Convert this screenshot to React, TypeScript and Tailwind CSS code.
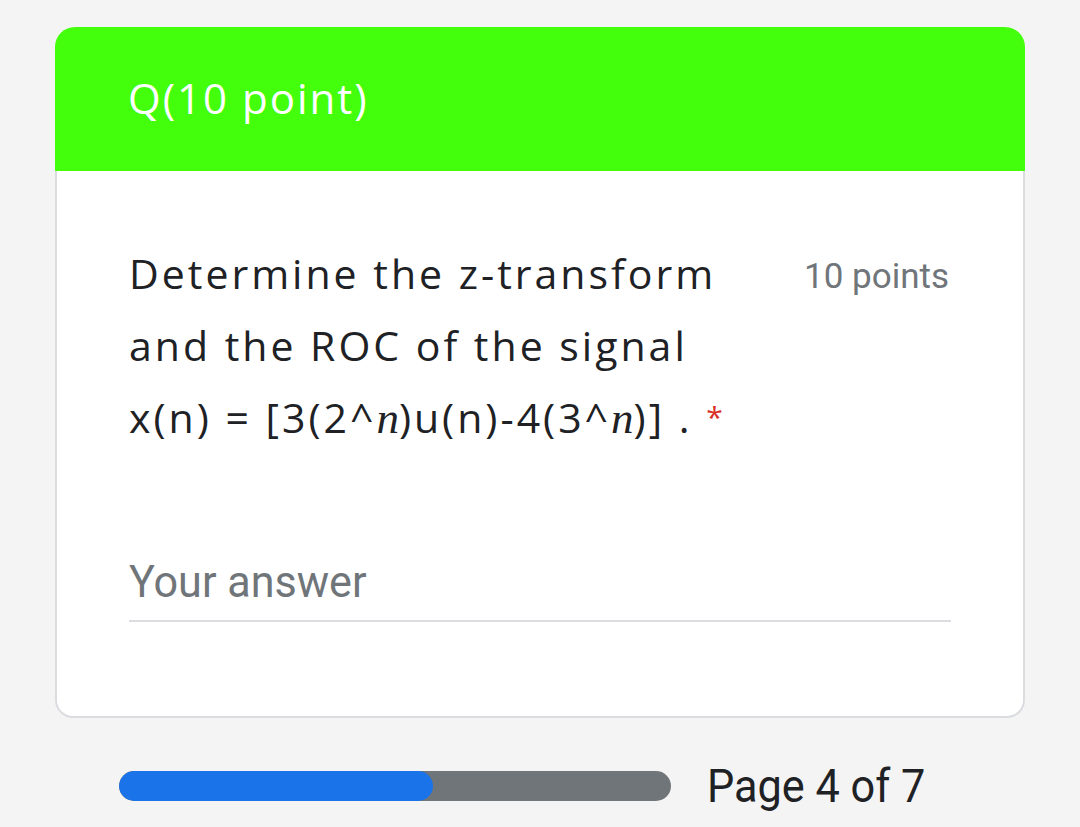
const App: React.FC = () => {
    return (
        <div className="min-h-[827px] w-[1080px] bg-[#f4f4f4] pt-[27px]">
            <div className="ml-[55px] w-[970px]">
                <div className="h-[144px] rounded-t-[20px] bg-[#44ff0b] pl-[73px] flex items-center">
                    <p className="text-[42px] tracking-[2px] text-white font-['Open_Sans',sans-serif] pb-[4px]">Q(10 point)</p>
                </div>
                <div className="h-[547px] bg-white border-2 border-t-0 border-[#dadce0] rounded-b-[18px] px-[72px] pt-[78px]">
                    <div className="flex justify-between items-start">
                        <p className="text-[41px] tracking-[3px] leading-[72px] text-[#202124] font-['Open_Sans',sans-serif] -mt-[12px]">
                            Determine the z-transform<br />
                            and the ROC of the signal<br />
                            x(n) = [3(2^<span className="font-['Liberation_Serif',serif] italic text-[45px] tracking-normal">n</span>)u(n)-4(3^<span className="font-['Liberation_Serif',serif] italic text-[45px] tracking-normal">n</span>)] . <span className="text-[#d93025] text-[30px] align-top">*</span>
                        </p>
                        <p className="text-[35px] text-[#70757a] font-['Roboto',sans-serif] pr-[2px] mt-[2px]">10 points</p>
                    </div>
                    <div className="mt-[104px] border-b-2 border-[#dadce0] pb-[14px]">
                        <span className="inline-block origin-left scale-x-[0.98] text-[44px] leading-[48px] text-[#70757a] font-['Roboto',sans-serif]">Your answer</span>
                    </div>
                </div>
            </div>
            <div className="mt-[44px] ml-[119px] flex items-center gap-[36px]">
                <div className="w-[552px] h-[30px] rounded-full bg-[#70757a] overflow-hidden">
                    <div className="w-[314px] h-full rounded-full bg-[#1a73e8]" />
                </div>
                <span className="inline-block origin-left scale-x-[0.94] text-[46px] leading-[48px] text-[#202124] font-['Roboto',sans-serif]">Page 4 of 7</span>
            </div>
        </div>
    );
};

export default App;
